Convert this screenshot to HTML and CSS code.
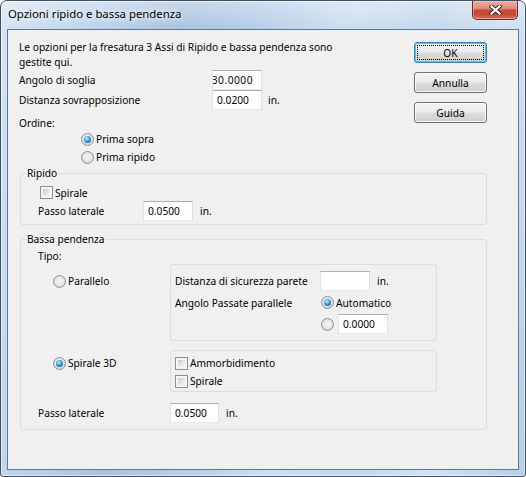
FILE: index.html
```html
<!DOCTYPE html>
<html lang="it">
<head>
<meta charset="utf-8">
<title>Opzioni ripido e bassa pendenza</title>
<link rel="stylesheet" href="styles.css">
</head>
<body>
<div class="window">
  <div class="titlebar">
    <span class="title">Opzioni ripido e bassa pendenza</span>
    <div class="close">
      <svg width="13" height="10" viewBox="0 0 13 10">
        <path d="M2.5 1.5 L10.5 8.5 M10.5 1.5 L2.5 8.5" stroke="#3a2a28" stroke-width="4.2" stroke-linecap="square" fill="none"/>
        <path d="M2.5 1.5 L10.5 8.5 M10.5 1.5 L2.5 8.5" stroke="#ffffff" stroke-width="2.2" stroke-linecap="square" fill="none"/>
      </svg>
    </div>
  </div>
  <div class="client">
    <div class="top">
      <div class="main">
        <p class="desc">Le opzioni per la fresatura 3 Assi di Ripido e bassa pendenza sono<br>gestite qui.</p>
        <div class="field">
          <span class="lbl lbl-top">Angolo di soglia</span>
          <div class="edit scrolled"><span class="wide">30.0000</span></div>
        </div>
        <div class="field">
          <span class="lbl lbl-top">Distanza sovrapposizione</span>
          <div class="edit">0.0200</div>
          <span class="unit">in.</span>
        </div>
        <div class="caption">Ordine:</div>
        <div class="order">
          <div class="opt-line"><span class="rb on"></span><span class="rl">Prima sopra</span></div>
          <div class="opt-line"><span class="rb"></span><span class="rl">Prima ripido</span></div>
        </div>
      </div>
      <div class="buttons">
        <div class="btn default">OK</div>
        <div class="btn">Annulla</div>
        <div class="btn">Guida</div>
      </div>
    </div>

    <fieldset class="group">
      <legend>Ripido</legend>
      <div class="gbody ripido">
        <div class="check-line"><span class="cb"></span><span class="cl">Spirale</span></div>
        <div class="field">
          <span class="lbl lbl-ripido">Passo laterale</span>
          <div class="edit">0.0500</div>
          <span class="unit u7">in.</span>
        </div>
      </div>
    </fieldset>

    <fieldset class="group bassa">
      <legend>Bassa pendenza</legend>
      <div class="gbody bassa-body">
        <div class="tipo">Tipo:</div>
        <div class="opt">
          <div class="opt-left first">
            <div class="opt-radio"><span class="rb"></span><span class="rl">Parallelo</span></div>
          </div>
          <div class="box box-par">
            <span class="bl">Distanza di sicurezza parete</span>
            <div class="bc"><div class="edit"></div><span class="unit u7">in.</span></div>
            <span class="bl">Angolo Passate parallele</span>
            <div class="bc"><span class="rb on rb-box"></span><span class="rl">Automatico</span></div>
            <span class="bl"></span>
            <div class="bc"><span class="rb rb-box"></span><div class="edit edit-ang">0.0000</div></div>
          </div>
        </div>
        <div class="opt second">
          <div class="opt-left">
            <div class="opt-radio short"><span class="rb on"></span><span class="rl">Spirale 3D</span></div>
          </div>
          <div class="box box-sp">
            <div class="check-line box-check"><span class="cb"></span><span class="cl">Ammorbidimento</span></div>
            <div class="check-line box-check"><span class="cb"></span><span class="cl">Spirale</span></div>
          </div>
        </div>
        <div class="field bottom-field">
          <span class="lbl lbl-bassa">Passo laterale</span>
          <div class="edit edit-49">0.0500</div>
          <span class="unit u7">in.</span>
        </div>
      </div>
    </fieldset>
  </div>
</div>
</body>
</html>
```
FILE: styles.css
```css
html, body {
  margin: 0;
  padding: 0;
  background: #ffffff;
}
body {
  font-family: "Noto Sans", "Open Sans", sans-serif;
  font-size: 10.2px;
  color: #000;
}
.window {
  width: 526px;
  height: 477px;
  box-sizing: border-box;
  border: 1px solid #3f5064;
  border-radius: 7px 7px 3px 3px;
  overflow: hidden;
  display: flex;
  flex-direction: column;
  background:
    linear-gradient(to bottom, rgba(255,255,255,0.35), rgba(255,255,255,0) 28px),
    linear-gradient(100deg, #d6e5f4 0%, #c2d7ed 12%, #a9c3e0 30%, #b4cce7 42%, #cddff1 58%, #c3d8ed 72%, #d2e2f3 84%, #b7cee8 100%);
  box-shadow: inset 0 0 0 1px rgba(255,255,255,0.55);
}
.titlebar {
  height: 28px;
  flex: none;
  display: flex;
  justify-content: space-between;
  align-items: flex-start;
}
.title {
  margin: 5px 0 0 7px;
  font-size: 11.35px;
  line-height: 16px;
  color: #000;
  text-shadow: 0 0 5px rgba(255,255,255,0.95), 0 0 9px rgba(255,255,255,0.8);
}
.close {
  width: 46px;
  height: 19px;
  margin-right: 7px;
  box-sizing: border-box;
  border: 1px solid #6e2a22;
  border-top: none;
  border-radius: 0 0 5px 5px;
  background: linear-gradient(to bottom, #e9ab9d 0%, #df9080 40%, #c94a33 52%, #c44a35 75%, #d9735e 100%);
  box-shadow: inset 0 0 0 1px rgba(255,220,210,0.45);
  display: flex;
  align-items: center;
  justify-content: center;
}
.client {
  flex: none;
  height: 441px;
  margin: 0 6px;
  box-sizing: border-box;
  border: 1px solid #62768c;
  background: #f0f0f0;
  padding: 10px 0 0 11px;
}
.top {
  display: flex;
  align-items: flex-start;
}
.main {
  flex: 1;
}
.desc {
  margin: 0;
  line-height: 15px;
}
.field {
  display: flex;
  align-items: center;
  height: 20px;
}
.lbl {
  flex: none;
}
.lbl-top { width: 193px; }
.lbl-ripido { width: 105px; }
.lbl-bassa { width: 132px; }
.unit { margin-left: 6px; }
.u7 { margin-left: 7px; }
.edit {
  width: 50px;
  height: 20px;
  flex: none;
  box-sizing: border-box;
  border: 1px solid;
  border-color: #abadb3 #dbdfe6 #e3e9ef #e2e3ea;
  background: #fff;
  padding: 0 4px;
  display: flex;
  align-items: center;
  overflow: hidden;
  white-space: nowrap;
}
.edit.scrolled {
  justify-content: flex-end;
  padding-right: 8px;
}
.wide {
  flex: none;
  letter-spacing: 0.5px;
}
.edit-49 { width: 49px; }
.caption {
  margin-top: 6px;
  line-height: 14px;
  height: 14px;
}
.order {
  padding-left: 62px;
}
.opt-line {
  height: 18px;
  display: flex;
  align-items: center;
}
.rb {
  width: 13px;
  height: 13px;
  flex: none;
  box-sizing: border-box;
  border-radius: 50%;
  border: 1px solid #8f9396;
  background: radial-gradient(circle at 50% 45%, #f4f4f4 0%, #e9e9e9 45%, #cfcfcf 80%, #e8e8e8 100%);
  display: inline-flex;
  align-items: center;
  justify-content: center;
}
.rb.on::after {
  content: "";
  width: 7px;
  height: 7px;
  border-radius: 50%;
  background: radial-gradient(circle at 40% 35%, #c4f0ff 0%, #4bb0e8 35%, #1a6aa8 75%, #0f3f6b 100%);
}
.rl { margin-left: 2px; }
.cb {
  width: 13px;
  height: 13px;
  flex: none;
  box-sizing: border-box;
  border: 1px solid #8e8f8f;
  padding: 2px;
  background: linear-gradient(135deg, #c6cacf 0%, #e3e5e7 55%, #f7f7f7 100%) content-box, #f5f5f5;
}
.cl { margin-left: 2px; }
.buttons {
  width: 73px;
  flex: none;
  margin: 2px 31px 0 0;
  display: flex;
  flex-direction: column;
  gap: 9px;
}
.btn {
  height: 21px;
  box-sizing: border-box;
  border: 1px solid #707070;
  border-radius: 3px;
  background: linear-gradient(to bottom, #f2f2f2 0%, #ebebeb 48%, #dddddd 52%, #cfcfcf 100%);
  box-shadow: inset 0 0 0 1px rgba(255,255,255,0.8);
  display: flex;
  align-items: center;
  justify-content: center;
  color: #000;
}
.btn.default {
  border-color: #3c7fb1;
  box-shadow: inset 0 0 0 1px #48c8f8;
  outline: 1px dotted #000;
  outline-offset: -4px;
}
.group {
  margin: 0 31px 0 1px;
  padding: 0;
  border: 1px solid #d5dfe5;
  border-radius: 3px;
  min-width: 0;
}
.group legend {
  margin-left: 5px;
  padding: 0 1px;
  line-height: 15px;
}
.bassa {
  margin-top: 7px;
}
.gbody {
  padding: 3px 0 3px 17px;
}
.check-line {
  height: 17px;
  display: flex;
  align-items: center;
}
.ripido .check-line .cb {
  margin-left: 2px;
}
.bassa-body {
  padding: 2px 0 6px 17px;
}
.tipo {
  line-height: 15px;
  height: 15px;
}
.opt {
  display: flex;
  align-items: flex-start;
}
.opt.second {
  margin-top: 9px;
}
.opt-left {
  width: 132px;
  flex: none;
  padding-top: 4px;
}
.opt-left.first {
  padding-top: 7px;
}
.opt-radio {
  margin-left: 15px;
  height: 20px;
  display: flex;
  align-items: center;
}
.opt-radio.short {
  height: 18px;
}
.box {
  width: 267px;
  box-sizing: border-box;
  border: 1px solid #d5dfe5;
  border-radius: 3px;
}
.box-par {
  padding: 6px 4px;
  display: grid;
  grid-template-columns: 145px 1fr;
  grid-template-rows: 20px 23px 20px;
  align-items: center;
}
.bc {
  display: flex;
  align-items: center;
}
.rb-box {
  margin-left: 1px;
}
.edit-ang {
  margin-left: 4px;
}
.box-sp {
  padding: 3px 4px 1px;
}
.box-check {
  height: 18px;
}
.bottom-field {
  margin-top: 11px;
}
```
